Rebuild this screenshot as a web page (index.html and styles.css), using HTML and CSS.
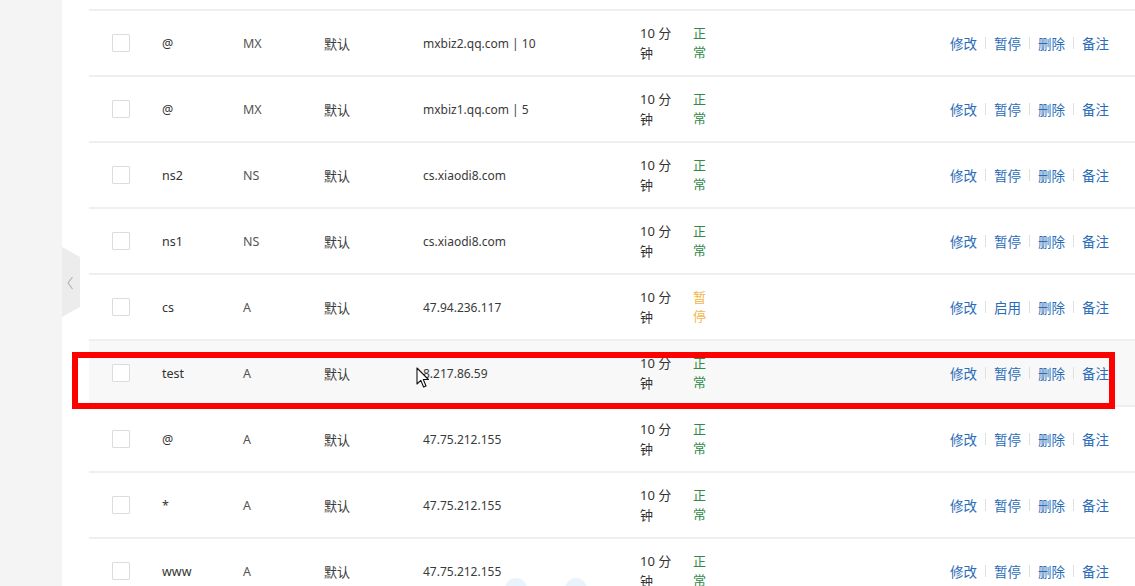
FILE: index.html
```html
<!DOCTYPE html>
<html lang="zh-CN">
<head>
<meta charset="utf-8">
<title>解析记录</title>
<link rel="stylesheet" href="styles.css">
</head>
<body>
<div class="page">
  <aside class="sidebar"></aside>
  <main class="main">
    <div class="table">
      <div class="row-tail"></div>

      <div class="row">
        <div class="c-check"><span class="checkbox"></span></div>
        <div class="c-host">@</div>
        <div class="c-type">MX</div>
        <div class="c-line">默认</div>
        <div class="c-value">mxbiz2.qq.com | 10</div>
        <div class="c-ttl"><span>10 分钟</span></div>
        <div class="c-status ok"><span>正常</span></div>
        <div class="c-ops"><a>修改</a><i></i><a>暂停</a><i></i><a>删除</a><i></i><a>备注</a></div>
      </div>

      <div class="row">
        <div class="c-check"><span class="checkbox"></span></div>
        <div class="c-host">@</div>
        <div class="c-type">MX</div>
        <div class="c-line">默认</div>
        <div class="c-value">mxbiz1.qq.com | 5</div>
        <div class="c-ttl"><span>10 分钟</span></div>
        <div class="c-status ok"><span>正常</span></div>
        <div class="c-ops"><a>修改</a><i></i><a>暂停</a><i></i><a>删除</a><i></i><a>备注</a></div>
      </div>

      <div class="row">
        <div class="c-check"><span class="checkbox"></span></div>
        <div class="c-host">ns2</div>
        <div class="c-type">NS</div>
        <div class="c-line">默认</div>
        <div class="c-value">cs.xiaodi8.com</div>
        <div class="c-ttl"><span>10 分钟</span></div>
        <div class="c-status ok"><span>正常</span></div>
        <div class="c-ops"><a>修改</a><i></i><a>暂停</a><i></i><a>删除</a><i></i><a>备注</a></div>
      </div>

      <div class="row">
        <div class="c-check"><span class="checkbox"></span></div>
        <div class="c-host">ns1</div>
        <div class="c-type">NS</div>
        <div class="c-line">默认</div>
        <div class="c-value">cs.xiaodi8.com</div>
        <div class="c-ttl"><span>10 分钟</span></div>
        <div class="c-status ok"><span>正常</span></div>
        <div class="c-ops"><a>修改</a><i></i><a>暂停</a><i></i><a>删除</a><i></i><a>备注</a></div>
      </div>

      <div class="row">
        <div class="c-check"><span class="checkbox"></span></div>
        <div class="c-host">cs</div>
        <div class="c-type">A</div>
        <div class="c-line">默认</div>
        <div class="c-value">47.94.236.117</div>
        <div class="c-ttl"><span>10 分钟</span></div>
        <div class="c-status paused"><span>暂停</span></div>
        <div class="c-ops"><a>修改</a><i></i><a>启用</a><i></i><a>删除</a><i></i><a>备注</a></div>
      </div>

      <div class="row hover">
        <div class="c-check"><span class="checkbox"></span></div>
        <div class="c-host">test</div>
        <div class="c-type">A</div>
        <div class="c-line">默认</div>
        <div class="c-value">8.217.86.59</div>
        <div class="c-ttl"><span>10 分钟</span></div>
        <div class="c-status ok"><span>正常</span></div>
        <div class="c-ops"><a>修改</a><i></i><a>暂停</a><i></i><a>删除</a><i></i><a>备注</a></div>
      </div>

      <div class="row">
        <div class="c-check"><span class="checkbox"></span></div>
        <div class="c-host">@</div>
        <div class="c-type">A</div>
        <div class="c-line">默认</div>
        <div class="c-value">47.75.212.155</div>
        <div class="c-ttl"><span>10 分钟</span></div>
        <div class="c-status ok"><span>正常</span></div>
        <div class="c-ops"><a>修改</a><i></i><a>暂停</a><i></i><a>删除</a><i></i><a>备注</a></div>
      </div>

      <div class="row">
        <div class="c-check"><span class="checkbox"></span></div>
        <div class="c-host">*</div>
        <div class="c-type">A</div>
        <div class="c-line">默认</div>
        <div class="c-value">47.75.212.155</div>
        <div class="c-ttl"><span>10 分钟</span></div>
        <div class="c-status ok"><span>正常</span></div>
        <div class="c-ops"><a>修改</a><i></i><a>暂停</a><i></i><a>删除</a><i></i><a>备注</a></div>
      </div>

      <div class="row">
        <div class="c-check"><span class="checkbox"></span></div>
        <div class="c-host">www</div>
        <div class="c-type">A</div>
        <div class="c-line">默认</div>
        <div class="c-value">47.75.212.155</div>
        <div class="c-ttl"><span>10 分钟</span></div>
        <div class="c-status ok"><span>正常</span></div>
        <div class="c-ops"><a>修改</a><i></i><a>暂停</a><i></i><a>删除</a><i></i><a>备注</a></div>
      </div>
    </div>
  </main>

  <div class="collapse-tab">
    <svg width="18" height="72" viewBox="0 0 18 72">
      <path d="M0 0 L18 10 L18 60 L0 70 Z" fill="#ececec"/>
      <path d="M10.5 30 L6 36 L10.5 42" fill="none" stroke="#b4b4b4" stroke-width="1.2"/>
    </svg>
  </div>

  <div class="highlight-box"></div>

  <svg class="cursor" width="14" height="22" viewBox="0 0 14 22">
    <path d="M1 1 L1 17 L4.8 13.4 L7.6 20 L10 19 L7.3 12.5 L12.4 12.5 Z" fill="#fff" stroke="#111" stroke-width="1.1" stroke-linejoin="round"/>
  </svg>

  <span class="blob blob-a"></span>
  <span class="blob blob-b"></span>
</div>
</body>
</html>
```

FILE: styles.css
```css
* {
  box-sizing: border-box;
}

html, body {
  margin: 0;
  padding: 0;
  background: #ffffff;
}

body {
  width: 1135px;
  height: 586px;
  overflow: hidden;
  font-family: "Noto Sans", "Noto Sans CJK SC", sans-serif;
  font-size: 13px;
  color: #3c3c3c;
}

.page {
  position: relative;
  display: flex;
  height: 586px;
  overflow: hidden;
}

.sidebar {
  width: 62px;
  flex: none;
  background: #f4f4f4;
}

.main {
  flex: 1;
  padding-left: 27px;
  background: #ffffff;
}

.table {
  display: flex;
  flex-direction: column;
}

.row-tail {
  height: 9px;
  flex: none;
}

.row {
  display: grid;
  grid-template-columns: 73px 81px 81px 99px 217px 53px 40px 1fr;
  align-items: center;
  height: 66px;
  flex: none;
  border-top: 2px solid #efefef;
  background: #ffffff;
}

.row.hover {
  background: #f8f8f8;
}

.c-check {
  padding-left: 23px;
  display: flex;
  align-items: center;
}

.checkbox {
  display: block;
  width: 18px;
  height: 18px;
  border: 1px solid #dcdcdc;
  border-radius: 1px;
  background: #ffffff;
}

.c-host {
  font-size: 12.5px;
  color: #333;
}

.c-type {
  font-size: 12.5px;
  color: #555;
}

.c-line {
  color: #3a3a3a;
}

.c-value {
  font-size: 12px;
  color: #3a3a3a;
}

.c-ttl span {
  display: block;
  width: 40px;
  line-height: 20px;
  color: #333;
}

.c-status span {
  display: block;
  width: 14px;
  line-height: 19px;
}

.c-status.ok {
  color: #2f8a4a;
}

.c-status.paused {
  color: #f5b54a;
}

.c-ops {
  display: flex;
  justify-content: flex-end;
  align-items: center;
  padding-right: 26px;
  font-size: 13.5px;
}

.c-ops a {
  color: #2a6cb8;
  cursor: pointer;
  white-space: nowrap;
}

.c-ops i {
  display: block;
  width: 1px;
  height: 12px;
  margin: 0 8px;
  background: #e0e0e0;
}

.collapse-tab {
  position: absolute;
  left: 62px;
  top: 247px;
  width: 18px;
  height: 72px;
}

.collapse-tab svg {
  display: block;
}

.highlight-box {
  position: absolute;
  left: 72px;
  top: 352px;
  width: 1043px;
  height: 57px;
  border: 6px solid #ff0000;
}

.cursor {
  position: absolute;
  left: 416px;
  top: 367px;
}

.blob {
  position: absolute;
  width: 22px;
  height: 22px;
  border-radius: 50%;
  background: #e9f3fc;
  top: 578px;
}

.blob-a {
  left: 505px;
}

.blob-b {
  left: 565px;
}
```
